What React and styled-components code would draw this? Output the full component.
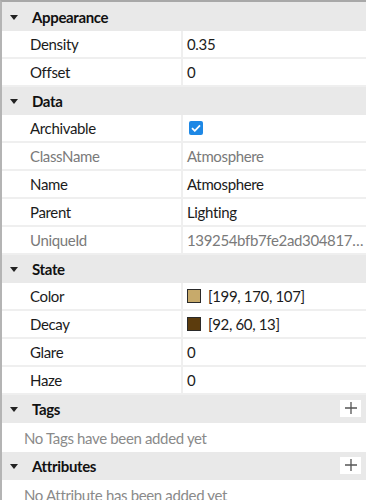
import React from "react";
import styled, { createGlobalStyle } from "styled-components";

const Global = createGlobalStyle`
	html, body {
		margin: 0;
		padding: 0;
		background: #ffffff;
	}
	body {
		font-family: "Lato", "Open Sans", sans-serif;
		font-size: 15px;
		letter-spacing: -0.35px;
		color: #1b1b1b;
	}
`;

const Panel = styled.div`
	width: 366px;
	height: 500px;
	overflow: hidden;
	box-sizing: border-box;
	border-top: 2px solid #a8a8a8;
	border-left: 2px solid #b4b4b4;
	background: #ffffff;
`;

const Header = styled.div`
	display: flex;
	align-items: center;
	height: ${(props) => props.h || 28}px;
	background: #e9e9e9;
	padding: 0 5px 0 8px;
	box-sizing: border-box;
`;

const Caret = styled.span`
	width: 0;
	height: 0;
	border-left: 4px solid transparent;
	border-right: 4px solid transparent;
	border-top: 5px solid #222;
	margin-right: 14px;
	margin-top: 1px;
`;

const HeaderTitle = styled.span`
	font-weight: 700;
	font-size: 15px;
	color: #111;
	flex: 1;
`;

const AddButton = styled.span`
	width: 21px;
	height: 17px;
	background: #ffffff;
	display: flex;
	align-items: center;
	justify-content: center;
	margin-top: -2px;
`;

const Row = styled.div`
	display: grid;
	grid-template-columns: 181px 1fr;
	height: 28px;
	box-sizing: border-box;
	border-bottom: 2px solid #efefef;
`;

const Label = styled.div`
	display: flex;
	align-items: center;
	padding-left: 28px;
	border-right: 2px solid #efefef;
	color: ${(props) => (props.muted ? "#7a7a7a" : "#1b1b1b")};
`;

const Value = styled.div`
	display: flex;
	align-items: center;
	gap: 7px;
	padding-left: 4px;
	padding-right: 6px;
	min-width: 0;
	white-space: nowrap;
	overflow: hidden;
	color: ${(props) => (props.muted ? "#7a7a7a" : "#1b1b1b")};
`;

const Swatch = styled.span`
	flex: none;
	width: 12px;
	height: 12px;
	border: 1px solid #2a2a2a;
	background: ${(props) => props.color};
`;

const Check = styled.span`
	flex: none;
	width: 14px;
	height: 14px;
	border-radius: 2px;
	background: #1e88e5;
	display: flex;
	align-items: center;
	justify-content: center;
	margin-left: 2px;
`;

const Message = styled.div`
	height: 29px;
	display: flex;
	align-items: center;
	padding-left: 22px;
	color: #8a8a8a;
`;

const PlusIcon = () => (
	<svg width="12" height="12" viewBox="0 0 12 12">
		<path d="M6 0 V12 M0 6 H12" stroke="#555" strokeWidth="1.3" />
	</svg>
);

const Section = ({ title, add, h, children }) => (
	<>
		<Header h={h}>
			<Caret />
			<HeaderTitle>{title}</HeaderTitle>
			{add && (
				<AddButton>
					<PlusIcon />
				</AddButton>
			)}
		</Header>
		{children}
	</>
);

const Prop = ({ name, muted, children }) => (
	<Row>
		<Label muted={muted}>{name}</Label>
		<Value muted={muted}>{children}</Value>
	</Row>
);

const App = () => (
	<Panel>
		<Global />
		<Section title="Appearance" h={29}>
			<Prop name="Density">0.35</Prop>
			<Prop name="Offset">0</Prop>
		</Section>
		<Section title="Data">
			<Prop name="Archivable">
				<Check>
					<svg width="10" height="8" viewBox="0 0 10 8">
						<path
							d="M1 4.2 L3.8 6.8 L9 1.4"
							fill="none"
							stroke="#fff"
							strokeWidth="1.8"
						/>
					</svg>
				</Check>
			</Prop>
			<Prop name="ClassName" muted>
				Atmosphere
			</Prop>
			<Prop name="Name">Atmosphere</Prop>
			<Prop name="Parent">Lighting</Prop>
			<Prop name="UniqueId" muted>
				139254bfb7fe2ad304817…
			</Prop>
		</Section>
		<Section title="State">
			<Prop name="Color">
				<Swatch color="rgb(199, 170, 107)" />
				[199, 170, 107]
			</Prop>
			<Prop name="Decay">
				<Swatch color="rgb(92, 60, 13)" />
				[92, 60, 13]
			</Prop>
			<Prop name="Glare">0</Prop>
			<Prop name="Haze">0</Prop>
		</Section>
		<Section title="Tags" add>
			<Message>No Tags have been added yet</Message>
		</Section>
		<Section title="Attributes" add>
			<Message>No Attribute has been added yet</Message>
		</Section>
	</Panel>
);

export default App;
